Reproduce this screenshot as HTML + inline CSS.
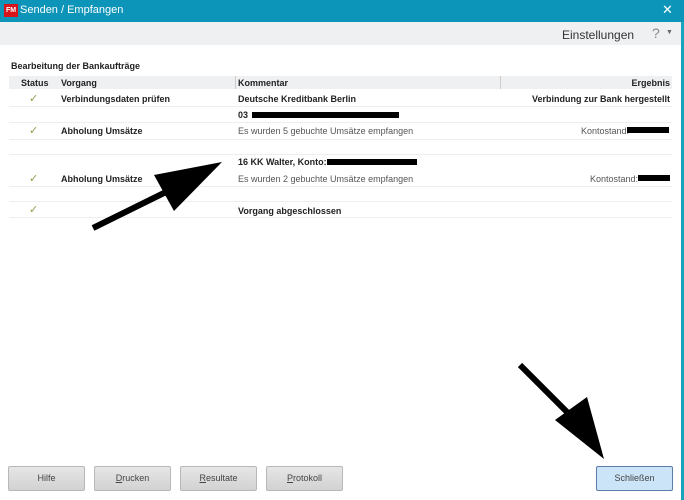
<!DOCTYPE html>
<html><head><meta charset="utf-8"><style>
*{margin:0;padding:0;box-sizing:border-box}
body{width:684px;height:500px;overflow:hidden;background:#fff;font-family:"Liberation Sans",sans-serif;font-size:9px;color:#222;position:relative}
.t{position:absolute;white-space:nowrap}
.b{font-weight:bold}
.g{color:#555}
.btn{position:absolute;top:466px;height:25px;width:77px;background:linear-gradient(#e6e6e6,#d2d2d2);border:1px solid #b8b8b8;border-radius:2px;text-align:center;line-height:23px;font-size:9px;color:#444}
.ck{position:absolute;left:29px;color:#8aa04a;font-size:11px}
.blk{position:absolute;background:#000;height:6px}
</style></head><body>
<div style="position:absolute;left:0;top:0;width:684px;height:22px;background:#0c95b8"></div>
<div style="position:absolute;left:4px;top:4px;width:14px;height:13px;background:#d7141a;color:#fff;font-size:7px;font-weight:bold;line-height:13px;text-align:center">FM</div>
<div class="t" style="left:20px;top:4px;color:#fff;font-size:11px">Senden / Empfangen</div>
<div class="t" style="left:662px;top:2px;color:#fff;font-size:13px">✕</div>
<div style="position:absolute;left:0;top:22px;width:681px;height:23px;background:#eef0f2"></div>
<div class="t" style="left:562px;top:28px;font-size:12px;color:#333">Einstellungen</div>
<div class="t" style="left:652px;top:25px;font-size:14px;color:#888">?</div>
<div class="t" style="left:666px;top:29px;font-size:7px;color:#666">▼</div>
<div style="position:absolute;left:681px;top:22px;width:3px;height:478px;background:#18a3bf"></div>
<div class="t b" style="left:11px;top:61px">Bearbeitung der Bankaufträge</div>
<div style="position:absolute;left:9px;top:76px;width:663px;height:13px;background:#eef0f2"></div>
<div style="position:absolute;left:235px;top:76px;width:1px;height:13px;background:#ccc"></div>
<div style="position:absolute;left:500px;top:76px;width:1px;height:13px;background:#ccc"></div>
<div class="t b" style="left:21px;top:78px">Status</div>
<div class="t b" style="left:61px;top:78px">Vorgang</div>
<div class="t b" style="left:238px;top:78px">Kommentar</div>
<div class="t b" style="right:14px;top:78px">Ergebnis</div>
<div class="ck" style="top:92px">✓</div>
<div class="t b" style="left:61px;top:94px">Verbindungsdaten prüfen</div>
<div class="t b" style="left:238px;top:94px">Deutsche Kreditbank Berlin</div>
<div class="t b" style="right:14px;top:94px">Verbindung zur Bank hergestellt</div>
<div style="position:absolute;left:9px;top:106px;width:663px;height:1px;background:#eee"></div>
<div class="t b" style="left:238px;top:110px">03</div>
<div class="blk" style="left:252px;top:112px;width:147px"></div>
<div style="position:absolute;left:9px;top:122px;width:663px;height:1px;background:#eee"></div>
<div class="ck" style="top:124px">✓</div>
<div class="t b" style="left:61px;top:126px">Abholung Umsätze</div>
<div class="t g" style="left:238px;top:126px">Es wurden 5 gebuchte Umsätze empfangen</div>
<div class="t g" style="left:581px;top:126px">Kontostand:</div>
<div class="blk" style="left:627px;top:127px;width:42px"></div>
<div style="position:absolute;left:9px;top:139px;width:663px;height:1px;background:#eee"></div>
<div style="position:absolute;left:9px;top:154px;width:663px;height:1px;background:#eee"></div>
<div class="t b" style="left:238px;top:157px">16 KK Walter, Konto:</div>
<div class="blk" style="left:327px;top:159px;width:90px"></div>
<div class="ck" style="top:172px">✓</div>
<div class="t b" style="left:61px;top:174px">Abholung Umsätze</div>
<div class="t g" style="left:238px;top:174px">Es wurden 2 gebuchte Umsätze empfangen</div>
<div class="t g" style="left:590px;top:174px">Kontostand:</div>
<div class="blk" style="left:638px;top:175px;width:32px"></div>
<div style="position:absolute;left:9px;top:186px;width:663px;height:1px;background:#eee"></div>
<div style="position:absolute;left:9px;top:201px;width:663px;height:1px;background:#eee"></div>
<div class="ck" style="top:203px">✓</div>
<div class="t b" style="left:238px;top:206px">Vorgang abgeschlossen</div>
<div style="position:absolute;left:9px;top:217px;width:663px;height:1px;background:#eee"></div>
<svg style="position:absolute;left:0;top:0" width="684" height="500">
<line x1="93" y1="228" x2="170" y2="190" stroke="#000" stroke-width="6"/>
<polygon points="222,162 154,175 174,211" fill="#000"/>
<line x1="520" y1="365" x2="575" y2="420" stroke="#000" stroke-width="6"/>
<polygon points="604,459 555,420 587,397" fill="#000"/>
</svg>
<div class="btn" style="left:8px">Hilfe</div>
<div class="btn" style="left:94px"><u>D</u>rucken</div>
<div class="btn" style="left:180px"><u>R</u>esultate</div>
<div class="btn" style="left:266px"><u>P</u>rotokoll</div>
<div class="btn" style="left:596px;background:#cce4f7;border:1px solid #5a7ea8">Schließen</div>
</body></html>
